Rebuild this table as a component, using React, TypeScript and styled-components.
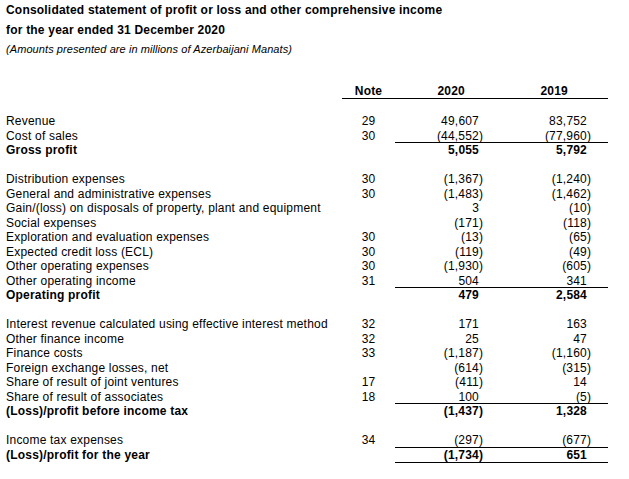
import React from "react";
import styled, { createGlobalStyle } from "styled-components";

const Global = createGlobalStyle`
  html, body { margin: 0; padding: 0; background: #fff; }
  body { font-family: "Liberation Sans", Arial, sans-serif; color: #000; }
`;

const Page = styled.div`
  width: 629px;
  height: 479px;
  box-sizing: border-box;
  padding: 0 0 0 6px;
  display: flex;
  flex-direction: column;
  overflow: hidden;
  letter-spacing: 0.2px;
`;

const Title = styled.div`
  font-weight: bold;
  font-size: 12px;
  line-height: 20px;
  white-space: nowrap;
`;

const Subtitle = styled.div`
  font-style: italic;
  font-size: 11px;
  letter-spacing: 0.08px;
  line-height: 20px;
  margin-top: -1px;
  white-space: nowrap;
`;

const Table = styled.div`
  margin-top: 24.5px;
  display: flex;
  flex-direction: column;
  font-size: 12px;
`;

const Row = styled.div`
  display: grid;
  grid-template-columns: 336px 53px 105px 108px;
  height: 14.5px;
  line-height: 16px;
  white-space: nowrap;
`;

const HeaderRow = styled(Row)`
  height: 15px;
  line-height: 14.5px;
  font-weight: bold;
`;

const HeadLabel = styled.div``;

const HeadCell = styled.div<{ $pr?: number; $center?: boolean }>`
  box-sizing: border-box;
  border-bottom: 1px solid #000;
  text-align: ${(p) => (p.$center ? "center" : "right")};
  padding-right: ${(p) => p.$pr ?? 0}px;
`;

const Label = styled.div<{ $bold?: boolean }>`
  font-weight: ${(p) => (p.$bold ? "bold" : "normal")};
`;

const NoteCell = styled.div`
  text-align: center;
`;

const Value = styled.div<{ $bold?: boolean; $rule?: boolean; $bottom?: boolean }>`
  box-sizing: border-box;
  text-align: right;
  padding-right: 21px;
  font-weight: ${(p) => (p.$bold ? "bold" : "normal")};
  border-top: ${(p) => (p.$rule ? "1px solid #000" : "none")};
  border-bottom: ${(p) => (p.$bottom ? "1px solid #000" : "none")};
  line-height: ${(p) => (p.$rule ? "14.5px" : "16px")};
`;

const Close = styled.span`
  display: inline-block;
  width: 0;
  overflow: visible;
`;

type Line = {
  label?: string;
  note?: string;
  a?: string;
  b?: string;
  bold?: boolean;
  rule?: boolean;
  bottom?: boolean;
  blank?: boolean;
};

const lines: Line[] = [
  { blank: true },
  { label: "Revenue", note: "29", a: "49,607", b: "83,752" },
  { label: "Cost of sales", note: "30", a: "(44,552)", b: "(77,960)" },
  { label: "Gross profit", a: "5,055", b: "5,792", bold: true, rule: true },
  { blank: true },
  { label: "Distribution expenses", note: "30", a: "(1,367)", b: "(1,240)" },
  { label: "General and administrative expenses", note: "30", a: "(1,483)", b: "(1,462)" },
  { label: "Gain/(loss) on disposals of property, plant and equipment", a: "3", b: "(10)" },
  { label: "Social expenses", a: "(171)", b: "(118)" },
  { label: "Exploration and evaluation expenses", note: "30", a: "(13)", b: "(65)" },
  { label: "Expected credit loss (ECL)", note: "30", a: "(119)", b: "(49)" },
  { label: "Other operating expenses", note: "30", a: "(1,930)", b: "(605)" },
  { label: "Other operating income", note: "31", a: "504", b: "341" },
  { label: "Operating profit", a: "479", b: "2,584", bold: true, rule: true },
  { blank: true },
  { label: "Interest revenue calculated using effective interest method", note: "32", a: "171", b: "163" },
  { label: "Other finance income", note: "32", a: "25", b: "47" },
  { label: "Finance costs", note: "33", a: "(1,187)", b: "(1,160)" },
  { label: "Foreign exchange losses, net", a: "(614)", b: "(315)" },
  { label: "Share of result of joint ventures", note: "17", a: "(411)", b: "14" },
  { label: "Share of result of associates", note: "18", a: "100", b: "(5)" },
  { label: "(Loss)/profit before income tax", a: "(1,437)", b: "1,328", bold: true, rule: true },
  { blank: true },
  { label: "Income tax expenses", note: "34", a: "(297)", b: "(677)" },
  { label: "(Loss)/profit for the year", a: "(1,734)", b: "651", bold: true, rule: true, bottom: true },
];

const Num = ({ v }: { v?: string }) => {
  if (!v) return null;
  if (v.endsWith(")")) {
    return (
      <>
        {v.slice(0, -1)}
        <Close>)</Close>
      </>
    );
  }
  return <>{v}</>;
};

export default function App() {
  return (
    <Page>
      <Global />
      <Title>Consolidated statement of profit or loss and other comprehensive income</Title>
      <Title>for the year ended 31 December 2020</Title>
      <Subtitle>(Amounts presented are in millions of Azerbaijani Manats)</Subtitle>
      <Table>
        <HeaderRow>
          <HeadLabel />
          <HeadCell $center>Note</HeadCell>
          <HeadCell $pr={35}>2020</HeadCell>
          <HeadCell $pr={40}>2019</HeadCell>
        </HeaderRow>
        {lines.map((l, i) =>
          l.blank ? (
            <Row key={i} />
          ) : (
            <Row key={i}>
              <Label $bold={l.bold}>{l.label}</Label>
              <NoteCell>{l.note}</NoteCell>
              <Value $bold={l.bold} $rule={l.rule} $bottom={l.bottom}>
                <Num v={l.a} />
              </Value>
              <Value $bold={l.bold} $rule={l.rule} $bottom={l.bottom}>
                <Num v={l.b} />
              </Value>
            </Row>
          )
        )}
      </Table>
    </Page>
  );
}
